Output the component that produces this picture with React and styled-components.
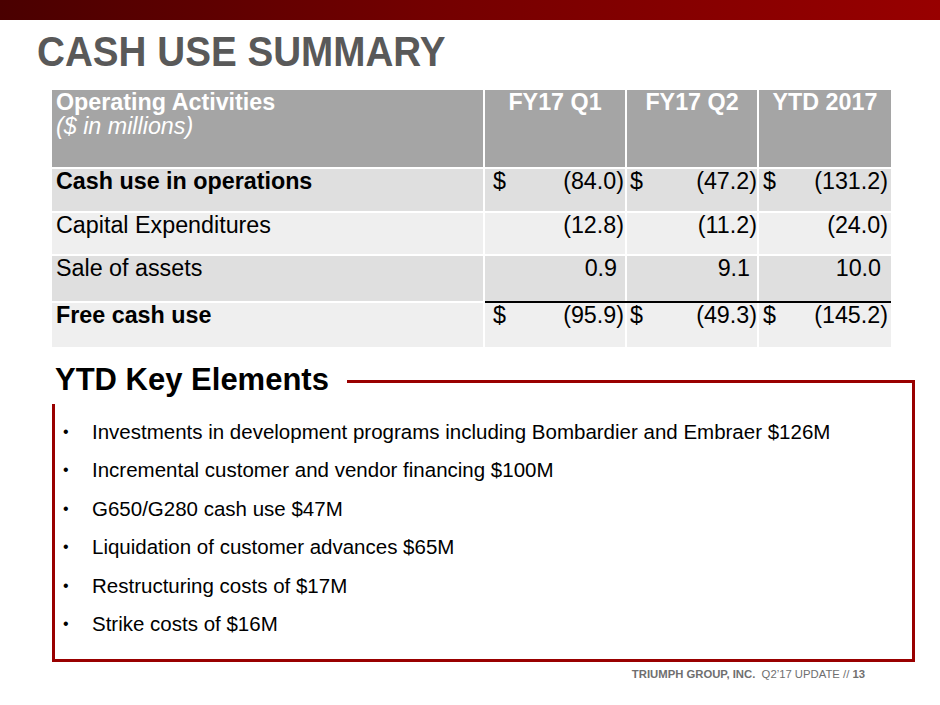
import React from "react";
import styled, { createGlobalStyle } from "styled-components";

const GlobalStyle = createGlobalStyle`
  html, body { margin: 0; padding: 0; background: #ffffff; }
  body { font-family: "Liberation Sans", Arial, sans-serif; }
`;

const Page = styled.div`
  width: 940px;
  height: 705px;
  overflow: hidden;
  background: #ffffff;
  display: flex;
  flex-direction: column;
`;

const TopBar = styled.div`
  height: 20px;
  flex: none;
  background: linear-gradient(to right, #4a0000 0%, #730000 45%, #980000 100%);
`;

const Title = styled.h1`
  margin: 11px 0 0 37px;
  font-size: 42px;
  line-height: 42px;
  font-weight: 700;
  color: #595959;
  transform: scaleX(0.92);
  transform-origin: left center;
  white-space: nowrap;
`;

const Table = styled.div`
  margin: 17px 0 0 52px;
  width: 839px;
  display: flex;
  flex-direction: column;
  gap: 2px;
  font-size: 23.3px;
  line-height: 1;
`;

const Row = styled.div`
  display: grid;
  grid-template-columns: 431px 1fr;
  column-gap: 2px;
  height: ${(p) => p.$h}px;
`;

const NumGroup = styled.div`
  display: grid;
  grid-template-columns: 140px 130px 132px;
  column-gap: 2px;
  border-top: ${(p) => (p.$rule ? "2px solid #000000" : "none")};
  margin-top: ${(p) => (p.$rule ? "-2px" : "0")};
`;

const HeadCell = styled.div`
  background: #a5a5a5;
  color: #ffffff;
  font-weight: 700;
  padding: 0 4px;
  line-height: 24px;
  text-align: ${(p) => (p.$center ? "center" : "left")};
`;

const HeadSub = styled.div`
  font-weight: 400;
  font-style: italic;
`;

const LabelCell = styled.div`
  background: ${(p) => (p.$dark ? "#dfdfdf" : "#efefef")};
  color: #000000;
  font-weight: ${(p) => (p.$bold ? 700 : 400)};
  padding: 1px 5px 0 4px;
  white-space: nowrap;
`;

const NumCell = styled.div`
  background: ${(p) => (p.$dark ? "#dfdfdf" : "#efefef")};
  color: #000000;
  display: flex;
  justify-content: space-between;
  padding: 1px ${(p) => p.$pr}px 0 ${(p) => p.$pl}px;
  white-space: nowrap;
`;

const Amount = styled.span`
  padding-right: ${(p) => (p.$pos ? "0.3em" : "0")};
`;

const Section = styled.div`
  margin: 17px 0 0 52px;
  width: 863px;
  display: flex;
  flex-direction: column;
`;

const HeadRow = styled.div`
  display: flex;
  height: 40px;
`;

const Heading = styled.h2`
  margin: 0 0 0 3px;
  font-size: 31px;
  line-height: 31px;
  font-weight: 700;
  color: #000000;
  white-space: nowrap;
`;

const HeadLine = styled.div`
  flex: 1;
  margin: 16px 0 0 18px;
  border-top: 3px solid #990000;
  border-right: 3px solid #990000;
`;

const Box = styled.ul`
  list-style: none;
  margin: 0;
  height: 258px;
  box-sizing: border-box;
  padding: 9px 0 0 8px;
  border: 3px solid #990000;
  border-top: none;
  font-size: 20.5px;
  line-height: 38.4px;
  color: #000000;
`;

const Item = styled.li`
  display: grid;
  grid-template-columns: 29px 1fr;
  white-space: nowrap;
`;

const Bullet = styled.span`
  font-size: 16px;
`;

const Footer = styled.div`
  margin-top: 5px;
  padding-right: 75px;
  display: flex;
  justify-content: flex-end;
  font-size: 11.3px;
  line-height: 14px;
  color: #6f6f6f;
  white-space: pre;
`;

const Strong = styled.span`
  font-weight: 700;
`;

const cols = [
  { pl: 8, pr: 1 },
  { pl: 3, pr: 0 },
  { pl: 4, pr: 3 },
];

const rows = [
  { label: "Cash use in operations", bold: true, dark: true, h: 42, dollar: true, vals: ["(84.0)", "(47.2)", "(131.2)"] },
  { label: "Capital Expenditures", dark: false, h: 41, vals: ["(12.8)", "(11.2)", "(24.0)"] },
  { label: "Sale of assets", dark: true, h: 45, vals: ["0.9", "9.1", "10.0"] },
  { label: "Free cash use", bold: true, dark: false, h: 44, dollar: true, rule: true, vals: ["(95.9)", "(49.3)", "(145.2)"] },
];

const bullets = [
  "Investments in development programs including Bombardier and Embraer $126M",
  "Incremental customer and vendor financing $100M",
  "G650/G280 cash use $47M",
  "Liquidation of customer advances $65M",
  "Restructuring costs of $17M",
  "Strike costs of $16M",
];

export default function App() {
  return (
    <Page>
      <GlobalStyle />
      <TopBar />
      <Title>CASH USE SUMMARY</Title>
      <Table>
        <Row $h={77}>
          <HeadCell>
            Operating Activities
            <HeadSub>($ in millions)</HeadSub>
          </HeadCell>
          <NumGroup>
            <HeadCell $center>FY17 Q1</HeadCell>
            <HeadCell $center>FY17 Q2</HeadCell>
            <HeadCell $center>YTD 2017</HeadCell>
          </NumGroup>
        </Row>
        {rows.map((r) => (
          <Row key={r.label} $h={r.h}>
            <LabelCell $dark={r.dark} $bold={r.bold}>{r.label}</LabelCell>
            <NumGroup $rule={r.rule}>
              {r.vals.map((v, i) => (
                <NumCell key={i} $dark={r.dark} $pl={cols[i].pl} $pr={cols[i].pr}>
                  <span>{r.dollar ? "$" : ""}</span>
                  <Amount $pos={!v.startsWith("(")}>{v}</Amount>
                </NumCell>
              ))}
            </NumGroup>
          </Row>
        ))}
      </Table>
      <Section>
        <HeadRow>
          <Heading>YTD Key Elements</Heading>
          <HeadLine />
        </HeadRow>
        <Box>
          {bullets.map((b) => (
            <Item key={b}>
              <Bullet>•</Bullet>
              <span>{b}</span>
            </Item>
          ))}
        </Box>
      </Section>
      <Footer>
        <Strong>TRIUMPH GROUP, INC.</Strong>
        {"  Q2’17 UPDATE // "}
        <Strong>13</Strong>
      </Footer>
    </Page>
  );
}
